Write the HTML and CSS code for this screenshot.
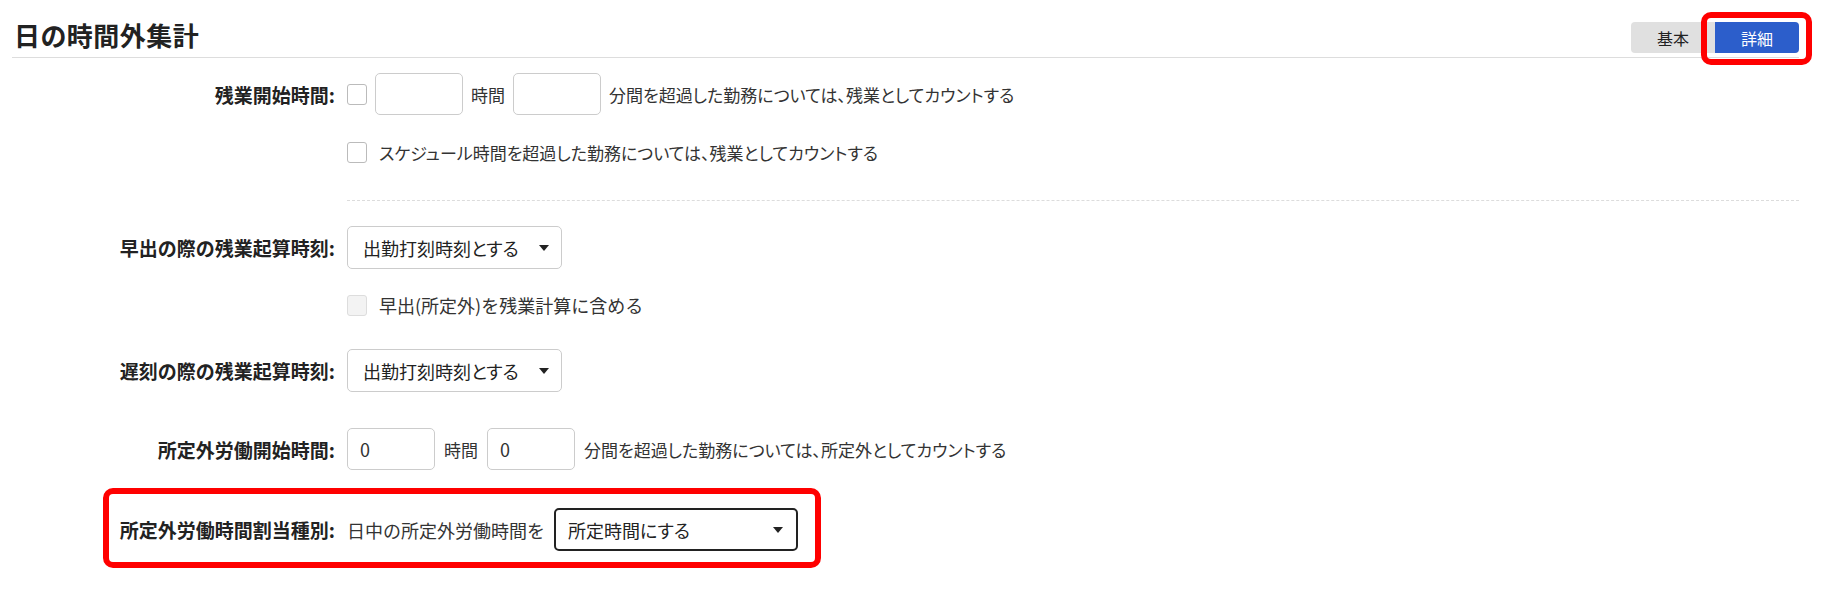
FILE: index.html
```html
<!DOCTYPE html>
<html lang="ja">
<head>
<meta charset="utf-8">
<title>日の時間外集計</title>
<link rel="stylesheet" href="styles.css">
</head>
<body>
<div class="page">
  <header class="header">
    <h1 class="title">日の時間外集計</h1>
    <div class="seg">
      <button class="seg-btn">基本</button>
      <button class="seg-btn active">詳細<span class="hl hl-btn"></span></button>
    </div>
  </header>

  <div class="form">
    <div class="row r1">
      <div class="label">残業開始時間:</div>
      <div class="ctrl">
        <input type="checkbox" class="cb">
        <input type="text" class="num">
        <span>時間</span>
        <input type="text" class="num">
        <span>分間を超過した勤務については、残業としてカウントする</span>
      </div>
    </div>
    <div class="row r1b">
      <div class="label"></div>
      <div class="ctrl wide">
        <input type="checkbox" class="cb">
        <span>スケジュール時間を超過した勤務については、残業としてカウントする</span>
      </div>
    </div>
    <div class="row sep-row">
      <div></div>
      <div class="sep"></div>
    </div>

    <div class="row r2">
      <div class="label">早出の際の残業起算時刻:</div>
      <div class="ctrl">
        <div class="select"><span>出勤打刻時刻とする</span><span class="arrow"></span></div>
      </div>
    </div>
    <div class="row r2b">
      <div class="label"></div>
      <div class="ctrl wide">
        <input type="checkbox" class="cb" disabled>
        <span class="wide-text">早出(所定外)を残業計算に含める</span>
      </div>
    </div>

    <div class="row r3">
      <div class="label">遅刻の際の残業起算時刻:</div>
      <div class="ctrl">
        <div class="select"><span>出勤打刻時刻とする</span><span class="arrow"></span></div>
      </div>
    </div>

    <div class="row r4">
      <div class="label">所定外労働開始時間:</div>
      <div class="ctrl loose">
        <input type="text" class="num" value="0">
        <span>時間</span>
        <input type="text" class="num" value="0">
        <span>分間を超過した勤務については、所定外としてカウントする</span>
      </div>
    </div>

    <div class="row r5">
      <div class="label">所定外労働時間割当種別:</div>
      <div class="ctrl loose">
        <span class="wide-text">日中の所定外労働時間を</span>
        <div class="select strong"><span>所定時間にする</span><span class="arrow"></span></div>
      </div>
      <span class="hl hl-row"></span>
    </div>
  </div>
</div>
</body>
</html>
```

FILE: styles.css
```css
html, body {
  margin: 0;
  background: #fff;
}

body {
  color: #333;
  font-family: "Noto Sans CJK JP", "Noto Sans", sans-serif;
  font-feature-settings: "palt";
}

.page {
  min-height: 593px;
  box-sizing: border-box;
  padding: 0 33px 42px 12px;
}

.header {
  display: flex;
  justify-content: space-between;
  align-items: flex-end;
  padding: 17px 0 4px 2px;
  border-bottom: 1px solid #ddd;
}

.title {
  margin: 0;
  font-size: 26px;
  font-weight: 700;
  line-height: 36px;
  color: #222;
  letter-spacing: 0.5px;
}

.seg {
  display: flex;
}

.seg-btn {
  width: 84px;
  height: 31px;
  padding: 0;
  border: 0;
  font-family: inherit;
  font-feature-settings: "palt";
  font-size: 16px;
  background: #e0e0e0;
  color: #222;
  border-radius: 4px 0 0 4px;
}

.seg-btn.active {
  position: relative;
  background: #2c5ecb;
  color: #fff;
  border-radius: 0 4px 4px 0;
}

.hl {
  position: absolute;
  box-sizing: border-box;
  border: 6px solid #ff0000;
  border-radius: 10px;
  pointer-events: none;
}

.hl-btn {
  top: -10px;
  right: -13px;
  bottom: -12px;
  left: -14px;
}

.row {
  display: grid;
  grid-template-columns: 323px 1fr;
  column-gap: 12px;
  align-items: center;
  min-height: 42px;
}

.label {
  text-align: right;
  font-size: 19px;
  font-weight: 700;
  font-feature-settings: normal;
  color: #222;
  white-space: nowrap;
}

.ctrl {
  display: flex;
  align-items: center;
  gap: 8px;
  font-size: 17px;
  white-space: nowrap;
}

.wide-text {
  font-size: 18px;
  font-feature-settings: normal;
}

.ctrl.wide {
  gap: 12px;
}

.ctrl.loose {
  gap: 9px;
}

.r1 { margin-top: 15px; }
.r1b { margin-top: 16px; }
.sep-row { margin-top: 27px; min-height: 0; }
.sep { border-top: 1px dashed #dcdcdc; }
.r2 { margin-top: 25px; }
.r2b { margin-top: 15px; }
.r3 { margin-top: 23px; }
.r4 { margin-top: 36px; }
.r5 { margin-top: 38px; position: relative; }

.hl-row {
  left: 91px;
  top: -20px;
  width: 718px;
  height: 80px;
}

.cb {
  appearance: none;
  -webkit-appearance: none;
  margin: 0;
  width: 20px;
  height: 21px;
  box-sizing: border-box;
  border: 1px solid #bbb;
  border-radius: 3px;
  background: #fff;
}

.cb:disabled {
  background: #f3f3f3;
  border-color: #ddd;
}

.num {
  width: 88px;
  height: 42px;
  box-sizing: border-box;
  margin: 0;
  padding: 0 12px;
  border: 1px solid #ccc;
  border-radius: 5px;
  font-family: inherit;
  font-size: 18px;
  color: #333;
  background: #fff;
}

.select {
  display: flex;
  align-items: center;
  justify-content: space-between;
  width: 215px;
  height: 43px;
  box-sizing: border-box;
  padding: 0 12px 0 15px;
  border: 1px solid #ccc;
  border-radius: 5px;
  background: #fff;
  color: #222;
  font-size: 18px;
}

.select.strong {
  width: 244px;
  padding: 0 13px 0 12px;
  border: 2px solid #222;
}

.arrow {
  width: 0;
  height: 0;
  border-left: 5px solid transparent;
  border-right: 5px solid transparent;
  border-top: 6px solid #222;
}
```
